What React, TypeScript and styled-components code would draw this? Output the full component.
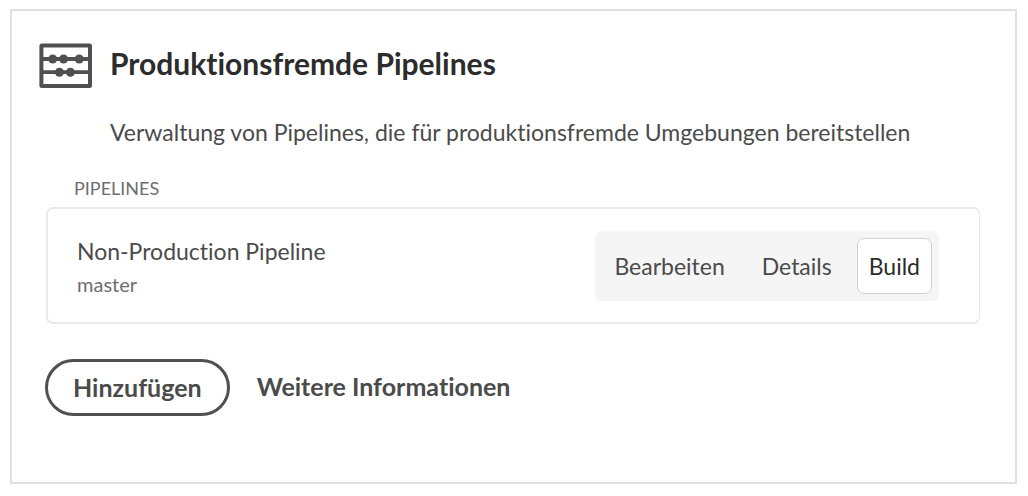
import React from "react";
import styled, { createGlobalStyle } from "styled-components";

const GlobalStyle = createGlobalStyle`
  *, *::before, *::after { box-sizing: border-box; }
  body {
    margin: 0;
    background: #fff;
    color: #4b4b4b;
    font-family: Lato, "Noto Sans", sans-serif;
    font-size: 23px;
    line-height: 32px;
    font-variant-ligatures: none;
  }
  h1, h2, p, ul { margin: 0; padding: 0; }
  button { font: inherit; cursor: pointer; }
`;

const Page = styled.main`
  padding: 9px 11px 12px 10px;
`;

const Card = styled.section`
  border: 2px solid #e0e0e0;
  padding: 32px 35px 66px 34px;
`;

const Header = styled.header`
  display: grid;
  grid-template-columns: 54px 1fr;
  column-gap: 18px;
  row-gap: 27px;
  align-items: start;
  margin-left: -8px;
`;

const Title = styled.h1`
  color: #2c2c2c;
  font-size: 30px;
  line-height: 40px;
  font-weight: 700;
`;

const Description = styled.p`
  grid-column: 2;
`;

const SectionLabel = styled.h2`
  margin: 28px 0 7px 28px;
  color: #6e6e6e;
  font-size: 18px;
  line-height: 24px;
  font-weight: 400;
  text-transform: uppercase;
`;

const PipelineList = styled.ul`
  list-style: none;
`;

const PipelineRow = styled.li`
  display: flex;
  align-items: center;
  justify-content: space-between;
  padding: 22px 40px 21px 29px;
  border: 2px solid #eaeaea;
  border-right-width: 1px;
  border-radius: 7px;
`;

const PipelineName = styled.p`
  line-height: 36px;
`;

const Branch = styled.p`
  color: #6e6e6e;
  font-size: 20px;
  line-height: 30px;
`;

const ActionGroup = styled.div`
  display: flex;
  gap: 13px;
  padding: 7px;
  border-radius: 7px;
  background: #f5f5f5;
`;

const ActionButton = styled.button<{ $raised?: boolean }>`
  height: 56px;
  padding: 0 11px;
  border: 1px solid ${(p) => (p.$raised ? "#d0d0d0" : "transparent")};
  border-radius: 7px;
  background: ${(p) => (p.$raised ? "#fff" : "transparent")};
  color: ${(p) => (p.$raised ? "#2c2c2c" : "#4b4b4b")};
`;

const Footer = styled.footer`
  display: flex;
  align-items: center;
  gap: 27px;
  margin-top: 35px;
  margin-left: -1px;
  font-size: 25px;
  font-weight: 700;
`;

const AddButton = styled.button`
  height: 57px;
  padding: 0 25px 2px;
  border: 3px solid #505050;
  border-radius: 29px;
  background: #fff;
  color: #4b4b4b;
`;

const InfoLink = styled.a`
  padding-bottom: 4px;
  color: #4b4b4b;
  text-decoration: none;
`;

const AbacusIcon = () => (
  <svg width="54" height="46" viewBox="0 0 54 46" fill="none" stroke="#505050" aria-hidden="true">
    <rect x="3.4" y="2.6" width="48.6" height="40.4" rx="0.5" strokeWidth="4" />
    <path d="M3 16H53M3 29.2H53" strokeWidth="3.8" />
    <g fill="#505050" stroke="none">
      <circle cx="14.7" cy="16" r="4.5" />
      <circle cx="25.6" cy="16" r="4.5" />
      <circle cx="41.2" cy="16" r="4.5" />
      <circle cx="21.4" cy="29.2" r="4.5" />
      <circle cx="32.4" cy="29.2" r="4.5" />
    </g>
  </svg>
);

export default function App() {
  return (
    <>
      <GlobalStyle />
      <Page>
        <Card>
          <Header>
            <AbacusIcon />
            <Title>Produktionsfremde Pipelines</Title>
            <Description>
              Verwaltung von Pipelines, die für produktionsfremde Umgebungen bereitstellen
            </Description>
          </Header>
          <SectionLabel>Pipelines</SectionLabel>
          <PipelineList>
            <PipelineRow>
              <div>
                <PipelineName>Non-Production Pipeline</PipelineName>
                <Branch>master</Branch>
              </div>
              <ActionGroup>
                <ActionButton type="button">Bearbeiten</ActionButton>
                <ActionButton type="button">Details</ActionButton>
                <ActionButton type="button" $raised>Build</ActionButton>
              </ActionGroup>
            </PipelineRow>
          </PipelineList>
          <Footer>
            <AddButton type="button">Hinzufügen</AddButton>
            <InfoLink href="#">Weitere Informationen</InfoLink>
          </Footer>
        </Card>
      </Page>
    </>
  );
}
